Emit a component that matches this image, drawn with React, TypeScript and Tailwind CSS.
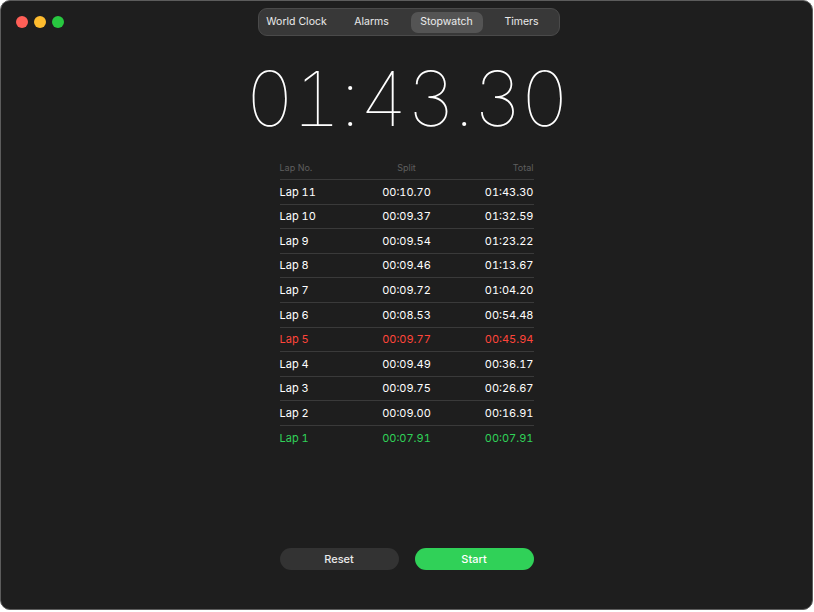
import React from 'react';

interface Lap {
  name: string;
  split: string;
  total: string;
  tone?: 'worst' | 'best';
}

const laps: Lap[] = [
  { name: 'Lap 11', split: '00:10.70', total: '01:43.30' },
  { name: 'Lap 10', split: '00:09.37', total: '01:32.59' },
  { name: 'Lap 9', split: '00:09.54', total: '01:23.22' },
  { name: 'Lap 8', split: '00:09.46', total: '01:13.67' },
  { name: 'Lap 7', split: '00:09.72', total: '01:04.20' },
  { name: 'Lap 6', split: '00:08.53', total: '00:54.48' },
  { name: 'Lap 5', split: '00:09.77', total: '00:45.94', tone: 'worst' },
  { name: 'Lap 4', split: '00:09.49', total: '00:36.17' },
  { name: 'Lap 3', split: '00:09.75', total: '00:26.67' },
  { name: 'Lap 2', split: '00:09.00', total: '00:16.91' },
  { name: 'Lap 1', split: '00:07.91', total: '00:07.91', tone: 'best' },
];

const tabs = ['World Clock', 'Alarms', 'Stopwatch', 'Timers'];

const App: React.FC = () => {
  return (
    <div className="w-[814px] h-[612px] bg-white font-['Inter','Liberation_Sans',sans-serif]">
      <div className="w-[813px] h-[610px] rounded-[10px] bg-[#1e1e1e] border border-[#5c5c5c] flex flex-col relative">
        {/* title bar */}
        <div className="h-[42px] flex items-center relative">
          <div className="flex gap-[6px] pl-[15px]">
            <span className="w-[12px] h-[12px] rounded-full bg-[#ff5f57]" />
            <span className="w-[12px] h-[12px] rounded-full bg-[#febc2e]" />
            <span className="w-[12px] h-[12px] rounded-full bg-[#28c840]" />
          </div>
          <div className="absolute left-[257px] top-[7px] w-[302px] h-[28px] rounded-[9px] bg-[#383838] border border-[#4a4a4a] flex items-center text-[10.5px] text-white/90 whitespace-nowrap">
            {tabs.map((t) => (
              <div key={t} className="w-[75px] shrink-0 flex justify-center">
                <div
                  className={
                    'w-[72px] h-[21px] flex items-center justify-center ' +
                    (t === 'Stopwatch' ? 'rounded-[7px] bg-[#545454]' : '')
                  }
                >
                  {t}
                </div>
              </div>
            ))}
          </div>
        </div>

        {/* big time */}
        <div className="flex justify-center mt-[8px]">
          <div className="text-[76px] leading-[94px] font-thin text-white tracking-[-1.5px] tabular-nums">
            01:43.30
          </div>
        </div>

        {/* laps table */}
        <div className="w-[254px] mx-auto mt-[11px] text-[11px]">
          <div className="grid grid-cols-3 text-[9px] text-[#5e5e5e] h-[24px] items-center border-b border-[#3a3a3a]">
            <span>Lap No.</span>
            <span className="text-center">Split</span>
            <span className="text-right">Total</span>
          </div>
          {laps.map((lap) => (
            <div
              key={lap.name}
              className={
                'grid grid-cols-3 h-[24.6px] items-center tabular-nums ' +
                (lap.tone === 'best' ? '' : 'border-b border-[#3a3a3a] ') +
                (lap.tone === 'worst'
                  ? 'text-[#ff453a]'
                  : lap.tone === 'best'
                  ? 'text-[#30d158]'
                  : 'text-white')
              }
            >
              <span>{lap.name}</span>
              <span className="text-center">{lap.split}</span>
              <span className="text-right">{lap.total}</span>
            </div>
          ))}
        </div>

        {/* buttons */}
        <div className="mt-auto mb-[39px] flex justify-center gap-[16px] text-[11px] font-medium">
          <button className="w-[119px] h-[22px] rounded-full bg-[#333333] text-white/90">Reset</button>
          <button className="w-[119px] h-[22px] rounded-full bg-[#30d158] text-white">Start</button>
        </div>
      </div>
    </div>
  );
};

export default App;
